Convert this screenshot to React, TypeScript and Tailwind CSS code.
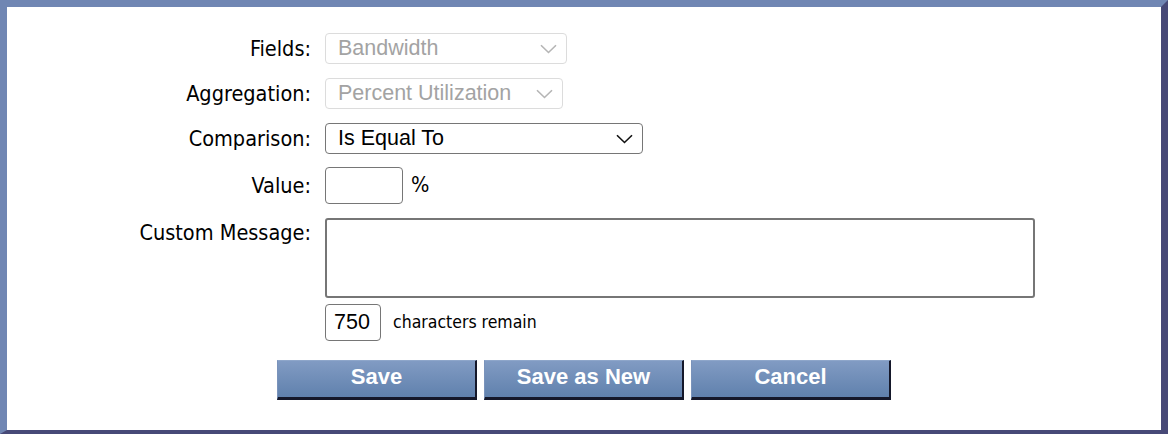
import React from 'react';

const labelFont = { fontFamily: '"DejaVu Sans Condensed", "DejaVu Sans", Tahoma, sans-serif' };

function Chevron({ color }: { color: string }) {
  return (
    <svg width="17" height="10" viewBox="0 0 17 10" fill="none">
      <path d="M1 1.2 L8.5 8.5 L16 1.2" stroke={color} strokeWidth="1.6" />
    </svg>
  );
}

function FakeSelect({ value, width, disabled }: { value: string; width: string; disabled?: boolean }) {
  return (
    <div
      className={
        'flex h-[31px] items-center justify-between rounded-[4px] border pl-[12px] pr-[9px] pt-[1px] ' +
        width +
        (disabled ? ' border-[#dcdcdc] text-[#a3a3a3]' : ' border-[#767676] text-black')
      }
    >
      <span className="text-[21.5px] leading-none">{value}</span>
      <Chevron color={disabled ? '#b5b5b5' : '#111'} />
    </div>
  );
}

function Label({ children, top }: { children: React.ReactNode; top?: boolean }) {
  return (
    <div
      className={'flex justify-end text-[21.5px] leading-none text-black ' + (top ? 'items-start pt-[4px]' : 'items-center')}
      style={labelFont}
    >
      {children}
    </div>
  );
}

function Btn({ children }: { children: React.ReactNode }) {
  return (
    <button className="flex h-[40px] w-[200px] items-start justify-center border-t border-l border-t-[#8ea6ca] border-l-[#7a93bb] border-r-2 border-b-[3px] border-r-[#15182a] border-b-[#15182a] bg-gradient-to-b from-[#819bc3] to-[#6081ad] pt-[4px] text-[22px] leading-[24px] font-bold text-white">
      {children}
    </button>
  );
}

export default function App() {
  return (
    <div
      className="h-[434px] w-[1168px] border-t-[7px] border-l-[7px] border-r-[7px] border-b-[4px] border-t-[#7086b3] border-l-[#7086b3] border-r-[#474977] border-b-[#474977] bg-white"
      style={{ fontFamily: '"Liberation Sans", Arial, sans-serif' }}
    >
      <div className="grid grid-cols-[304px_auto] gap-x-[14px] pt-[26px]">
        <Label>Fields:</Label>
        <FakeSelect value="Bandwidth" width="w-[242px]" disabled />

        <div className="col-span-2 h-[14px]" />
        <Label>Aggregation:</Label>
        <FakeSelect value="Percent Utilization" width="w-[238px]" disabled />

        <div className="col-span-2 h-[14px]" />
        <Label>Comparison:</Label>
        <FakeSelect value="Is Equal To" width="w-[318px]" />

        <div className="col-span-2 h-[13px]" />
        <Label>Value:</Label>
        <div className="flex items-center gap-[8px]">
          <div className="h-[37px] w-[78px] rounded-[4px] border border-[#767676]" />
          <span className="text-[21.5px] text-black" style={labelFont}>%</span>
        </div>

        <div className="col-span-2 h-[14px]" />
        <Label top>Custom Message:</Label>
        <div className="h-[80px] w-[710px] rounded-[3px] border-2 border-[#767676]" />

        <div className="col-span-2 h-[6px]" />
        <div />
        <div className="flex items-center gap-[12px]">
          <div className="flex h-[37px] w-[56px] items-center rounded-[4px] border border-[#767676] pl-[8px] text-[21.5px] text-black">
            750
          </div>
          <span className="text-[17.5px] text-black" style={labelFont}>characters remain</span>
        </div>
      </div>

      <div className="mt-[19px] flex justify-center gap-[7px]">
        <Btn>Save</Btn>
        <Btn>Save as New</Btn>
        <Btn>Cancel</Btn>
      </div>
    </div>
  );
}
